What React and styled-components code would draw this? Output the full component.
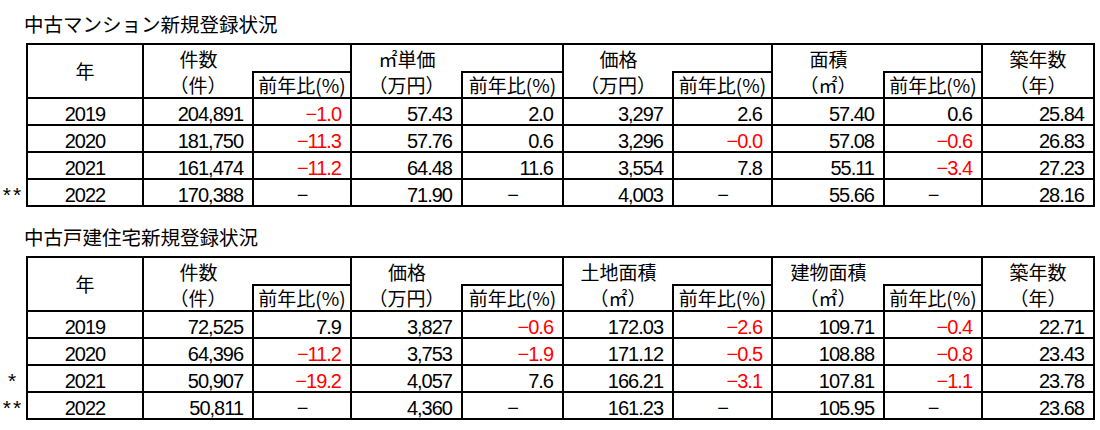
import React from "react";
import styled, { createGlobalStyle } from "styled-components";

const JP = `"Noto Sans CJK JP", "Noto Sans", sans-serif`;
const NUM = `"Liberation Sans", Arial, sans-serif`;

const GlobalStyle = createGlobalStyle`
  html, body { margin: 0; padding: 0; background: #fff; }
  body { font-family: ${NUM}; color: #000; }
`;

const Page = styled.main`
  display: flex;
  flex-direction: column;
  gap: 17px;
  padding-top: 11px;
  width: 1100px;
`;

const Section = styled.section`
  display: flex;
  flex-direction: column;
  gap: 6px;
`;

const Title = styled.h2`
  margin: 0;
  padding-left: 24px;
  font: 400 19.5px/26px ${JP};
`;

const Table = styled.table`
  border-collapse: collapse;
  table-layout: fixed;
  width: 1095px;
`;

const Col = styled.col`
  width: ${(p) => p.$w}px;
`;

const HeadRow = styled.tr`
  height: ${(p) => p.$h}px;
`;

const BodyRow = styled.tr`
  height: 27px;
`;

const Head = styled.th`
  border: 2px solid #000;
  padding: 0;
  font: 400 19px/20px ${JP};
  text-align: center;
  vertical-align: middle;
  white-space: nowrap;
  ${(p) => p.$openBottom && "border-bottom-style: hidden;"}
  ${(p) => p.$openRight && "border-right-style: hidden;"}
`;

const Mark = styled.td`
  border: none;
  padding: 0 0 1px;
  text-align: center;
  vertical-align: bottom;
  font: 400 21px/20px ${NUM};
  letter-spacing: 2px;
`;

const MarkHead = styled.th`
  border: none;
  padding: 0;
`;

const Cell = styled.td`
  border: 2px solid #000;
  padding: 0 ${(p) => (p.$align === "right" ? "9px" : "0")} 0 0;
  font: 400 20px/20px ${NUM};
  letter-spacing: -1px;
  text-align: ${(p) => p.$align};
  color: ${(p) => (p.$neg ? "#ff0000" : "#000")};
  vertical-align: bottom;
  white-space: nowrap;
`;

const WIDTHS = [27, 116, 110, 98, 111, 101, 110, 99, 112, 98, 112];

const DASH = "−";

const condo = {
  title: "中古マンション新規登録状況",
  groups: [
    ["件数", "（件）"],
    ["㎡単価", "（万円）"],
    ["価格", "（万円）"],
    ["面積", "（㎡）"],
  ],
  rows: [
    { mark: "", year: "2019", v: ["204,891", "−1.0", "57.43", "2.0", "3,297", "2.6", "57.40", "0.6", "25.84"] },
    { mark: "", year: "2020", v: ["181,750", "−11.3", "57.76", "0.6", "3,296", "−0.0", "57.08", "−0.6", "26.83"] },
    { mark: "", year: "2021", v: ["161,474", "−11.2", "64.48", "11.6", "3,554", "7.8", "55.11", "−3.4", "27.23"] },
    { mark: "**", year: "2022", v: ["170,388", DASH, "71.90", DASH, "4,003", DASH, "55.66", DASH, "28.16"] },
  ],
};

const house = {
  title: "中古戸建住宅新規登録状況",
  groups: [
    ["件数", "（件）"],
    ["価格", "（万円）"],
    ["土地面積", "（㎡）"],
    ["建物面積", "（㎡）"],
  ],
  rows: [
    { mark: "", year: "2019", v: ["72,525", "7.9", "3,827", "−0.6", "172.03", "−2.6", "109.71", "−0.4", "22.71"] },
    { mark: "", year: "2020", v: ["64,396", "−11.2", "3,753", "−1.9", "171.12", "−0.5", "108.88", "−0.8", "23.43"] },
    { mark: "*", year: "2021", v: ["50,907", "−19.2", "4,057", "7.6", "166.21", "−3.1", "107.81", "−1.1", "23.78"] },
    { mark: "**", year: "2022", v: ["50,811", DASH, "4,360", DASH, "161.23", DASH, "105.95", DASH, "23.68"] },
  ],
};

function StatTable({ data }) {
  return (
    <Section>
      <Title>{data.title}</Title>
      <Table>
        <colgroup>
          {WIDTHS.map((w, i) => (
            <Col key={i} $w={w} />
          ))}
        </colgroup>
        <thead>
          <HeadRow $h={28}>
            <MarkHead rowSpan={2} />
            <Head rowSpan={2}>年</Head>
            {data.groups.map(([label]) => (
              <React.Fragment key={label}>
                <Head $openBottom $openRight>{label}</Head>
                <Head />
              </React.Fragment>
            ))}
            <Head $openBottom>築年数</Head>
          </HeadRow>
          <HeadRow $h={26}>
            {data.groups.map(([label, unit]) => (
              <React.Fragment key={label}>
                <Head>{unit}</Head>
                <Head>前年比(%)</Head>
              </React.Fragment>
            ))}
            <Head>（年）</Head>
          </HeadRow>
        </thead>
        <tbody>
          {data.rows.map((r) => (
            <BodyRow key={r.year}>
              <Mark>{r.mark}</Mark>
              <Cell $align="center">{r.year}</Cell>
              {r.v.map((val, i) => {
                const dash = val === DASH;
                return (
                  <Cell
                    key={i}
                    $align={dash ? "center" : "right"}
                    $neg={!dash && val.startsWith("−")}
                  >
                    {val}
                  </Cell>
                );
              })}
            </BodyRow>
          ))}
        </tbody>
      </Table>
    </Section>
  );
}

export default function App() {
  return (
    <>
      <GlobalStyle />
      <Page>
        <StatTable data={condo} />
        <StatTable data={house} />
      </Page>
    </>
  );
}
